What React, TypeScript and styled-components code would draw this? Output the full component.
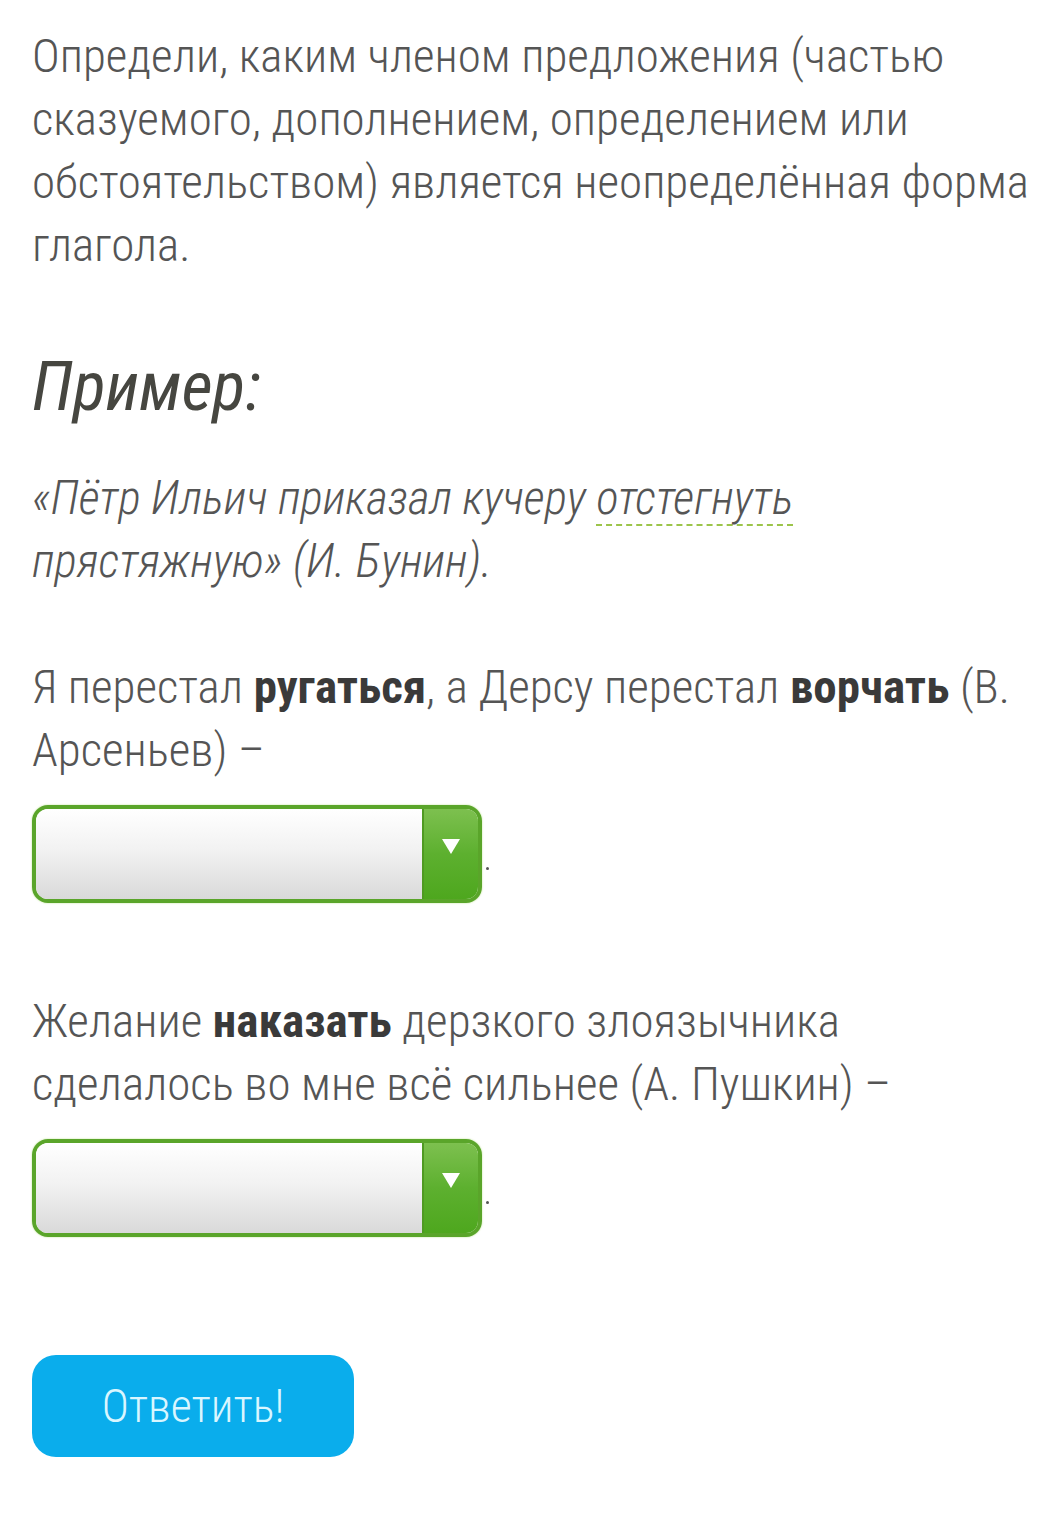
import React from 'react';
import styled, { createGlobalStyle } from 'styled-components';

const GlobalStyle = createGlobalStyle`
  html, body {
    margin: 0;
    padding: 0;
    background: #ffffff;
  }
  body {
    font-family: "Roboto Condensed", "Liberation Sans Narrow", "DejaVu Sans Condensed", Roboto, sans-serif;
    font-stretch: condensed;
  }
`;

const Page = styled.div`
  width: 1050px;
  min-height: 1521px;
  box-sizing: border-box;
  padding: 24px 20px 0 32px;
  color: #555555;
  font-weight: 300;
`;

const Text = styled.p<{ $gap?: number }>`
  margin: 0 0 ${(p) => p.$gap ?? 0}px;
  font-size: 47px;
  line-height: 63px;
`;

const Heading = styled.h2`
  margin: 0 0 34px;
  font-size: 68px;
  line-height: 90px;
  font-style: italic;
  font-weight: 400;
  color: #464640;
`;

const Quote = styled(Text)`
  font-style: italic;
`;

const Dotted = styled.span`
  text-decoration: underline dashed #9cc44a;
  text-decoration-thickness: 2px;
  text-underline-offset: 10px;
`;

const Strong = styled.b`
  font-weight: 700;
  color: #3a3a3a;
`;

const SelectRow = styled.div<{ $gap: number }>`
  display: flex;
  align-items: flex-end;
  margin: 0 0 ${(p) => p.$gap}px;
`;

const SelectBox = styled.div`
  width: 450px;
  height: 98px;
  box-sizing: border-box;
  border: 4px solid #5aa52a;
  border-radius: 16px;
  display: flex;
  overflow: hidden;
  box-shadow: 0 0 2px #b8e08a;
`;

const SelectField = styled.div`
  flex: 1;
  background: linear-gradient(to bottom, #ffffff 0%, #f2f2f2 45%, #d9d9d9 100%);
  border-right: 2px solid #4f9a22;
`;

const SelectArrow = styled.div`
  width: 54px;
  background: linear-gradient(to bottom, #7dc04f 0%, #5db02f 50%, #4ea71e 100%);
  display: flex;
  justify-content: center;
  padding-top: 30px;
  box-sizing: border-box;
`;

const Triangle = styled.div`
  width: 0;
  height: 0;
  border-left: 9px solid transparent;
  border-right: 9px solid transparent;
  border-top: 15px solid #ffffff;
`;

const Dot = styled.span`
  width: 3px;
  height: 3px;
  border-radius: 50%;
  background: #555555;
  margin: 0 0 33px 4px;
`;

const Button = styled.button`
  width: 322px;
  height: 102px;
  border: none;
  border-radius: 24px;
  background: #0aadec;
  color: #d9f6ff;
  font-family: inherit;
  font-stretch: condensed;
  font-weight: 300;
  font-size: 46px;
  cursor: pointer;
  padding: 0;
`;

const Select: React.FC<{ gap: number }> = ({ gap }) => (
  <SelectRow $gap={gap}>
    <SelectBox>
      <SelectField />
      <SelectArrow>
        <Triangle />
      </SelectArrow>
    </SelectBox>
    <Dot />
  </SelectRow>
);

const App: React.FC = () => (
  <>
    <GlobalStyle />
    <Page>
      <Text $gap={66}>
        Определи, каким членом предложения (частью сказуемого, дополнением, определением или
        обстоятельством) является неопределённая форма глагола.
      </Text>
      <Heading>Пример:</Heading>
      <Quote $gap={63}>
        «Пётр Ильич приказал кучеру <Dotted>отстегнуть</Dotted> прястяжную» (И. Бунин).
      </Quote>
      <Text $gap={24}>
        Я перестал <Strong>ругаться</Strong>, а Дерсу перестал <Strong>ворчать</Strong> (В.
        Арсеньев) –
      </Text>
      <Select gap={86} />
      <Text $gap={24}>
        Желание <Strong>наказать</Strong> дерзкого злоязычника сделалось во мне всё сильнее (А.
        Пушкин) –
      </Text>
      <Select gap={118} />
      <Button>Ответить!</Button>
    </Page>
  </>
);

export default App;
